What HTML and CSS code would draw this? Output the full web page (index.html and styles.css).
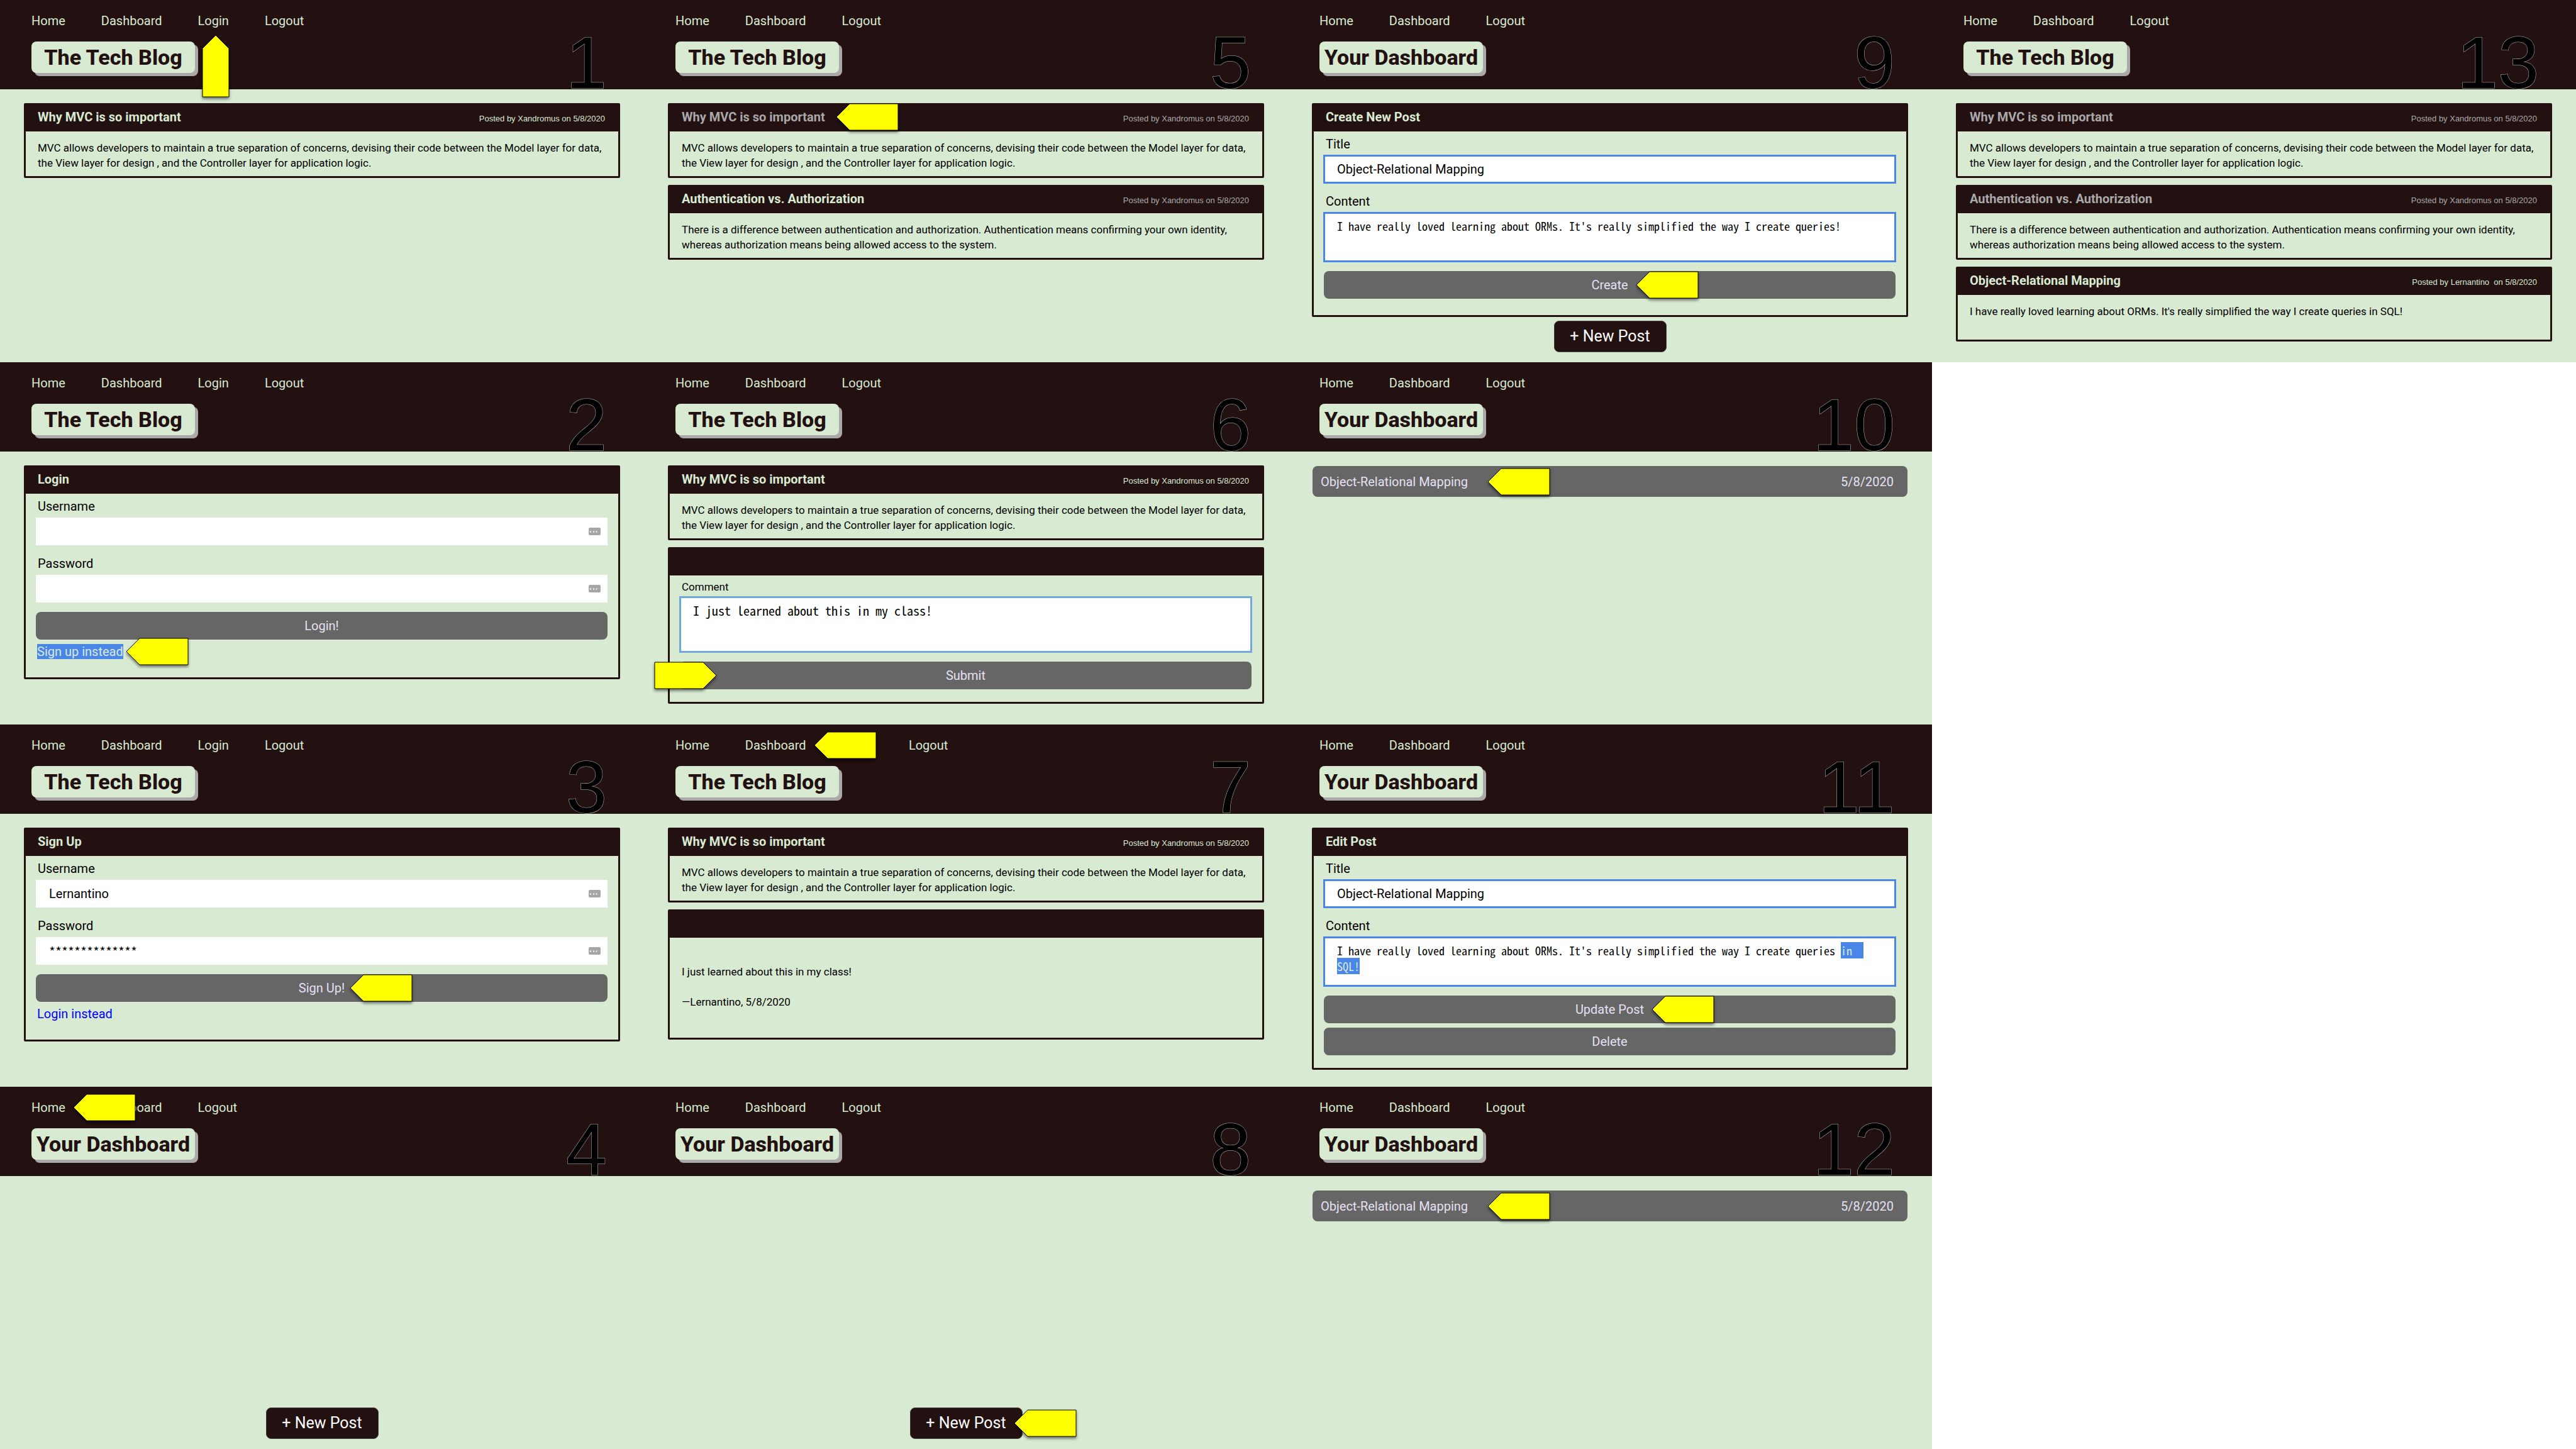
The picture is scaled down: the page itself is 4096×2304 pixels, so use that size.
FILE: index.html
```html
<!DOCTYPE html>
<html lang="en">
<head>
<meta charset="utf-8">
<title>The Tech Blog – walkthrough</title>
<link rel="stylesheet" href="styles.css">
</head>
<body>
<svg class="defs" aria-hidden="true">
  <symbol id="arrow-left" viewBox="0 0 100 44"><path d="M1 22 22 1H99V43H22Z"/></symbol>
  <symbol id="arrow-right" viewBox="0 0 100 44"><path d="M99 22 78 1H1V43H78Z"/></symbol>
  <symbol id="arrow-up" viewBox="0 0 44 100"><path d="M22 1 43 22V99H1V22Z"/></symbol>
  <symbol id="keys" viewBox="0 0 19 12"><rect width="19" height="12" rx="2" fill="#a6a6a6"/><path d="M2 5.500h2v2h-2zM7 5.500h2v2h-2zM11.500 5.500h2v2h-2z" fill="#fff"/></symbol>
</svg>
<div class="board">

  <section class="screen">
    <header class="top">
      <div class="brand">
        <nav class="nav"><a href="#">Home</a><a href="#">Dashboard</a><a href="#" class="anchor">Login<svg class="arrow arrow-up"><use href="#arrow-up"/></svg></a><a href="#">Logout</a></nav>
        <h1 class="logo">The Tech Blog</h1>
      </div>
      <span class="step">1</span>
    </header>
    <main class="main">
      <article class="card">
        <header class="card-head"><h2>Why MVC is so important</h2><span class="byline">Posted by Xandromus on 5/8/2020</span></header>
        <p class="post">MVC allows developers to maintain a true separation of concerns, devising their code between the Model layer for data, the View layer for design , and the Controller layer for application logic.</p>
      </article>
    </main>
  </section>

  <section class="screen">
    <header class="top">
      <div class="brand">
        <nav class="nav"><a href="#">Home</a><a href="#">Dashboard</a><a href="#">Login</a><a href="#">Logout</a></nav>
        <h1 class="logo">The Tech Blog</h1>
      </div>
      <span class="step">2</span>
    </header>
    <main class="main">
      <section class="card card-form">
        <header class="card-head"><h2>Login</h2></header>
        <form class="form">
          <label for="login-user">Username</label>
          <div class="field"><input id="login-user" type="text"><svg class="keys"><use href="#keys"/></svg></div>
          <label for="login-pass">Password</label>
          <div class="field"><input id="login-pass" type="password"><svg class="keys"><use href="#keys"/></svg></div>
          <button type="button" class="btn">Login!</button>
          <a href="#" class="switch anchor marked">Sign up instead<svg class="arrow arrow-close"><use href="#arrow-left"/></svg></a>
        </form>
      </section>
    </main>
  </section>

  <section class="screen">
    <header class="top">
      <div class="brand">
        <nav class="nav"><a href="#">Home</a><a href="#">Dashboard</a><a href="#">Login</a><a href="#">Logout</a></nav>
        <h1 class="logo">The Tech Blog</h1>
      </div>
      <span class="step">3</span>
    </header>
    <main class="main">
      <section class="card card-form">
        <header class="card-head"><h2>Sign Up</h2></header>
        <form class="form">
          <label for="sign-user">Username</label>
          <div class="field"><input id="sign-user" type="text" value="Lernantino"><svg class="keys"><use href="#keys"/></svg></div>
          <label for="sign-pass">Password</label>
          <div class="field"><input id="sign-pass" class="masked" type="text" value="**************"><svg class="keys"><use href="#keys"/></svg></div>
          <button type="button" class="btn"><span class="anchor">Sign Up!<svg class="arrow arrow-near"><use href="#arrow-left"/></svg></span></button>
          <a href="#" class="switch">Login instead</a>
        </form>
      </section>
    </main>
  </section>

  <section class="screen">
    <header class="top">
      <div class="brand">
        <nav class="nav"><a href="#" class="anchor">Home<svg class="arrow"><use href="#arrow-left"/></svg></a><a href="#">Dashboard</a><a href="#">Logout</a></nav>
        <h1 class="logo">Your Dashboard</h1>
      </div>
      <span class="step">4</span>
    </header>
    <main class="main">
      <button type="button" class="new-post">+ New Post</button>
    </main>
  </section>

  <section class="screen">
    <header class="top">
      <div class="brand">
        <nav class="nav"><a href="#">Home</a><a href="#">Dashboard</a><a href="#">Logout</a></nav>
        <h1 class="logo">The Tech Blog</h1>
      </div>
      <span class="step">5</span>
    </header>
    <main class="main">
      <article class="card visited">
        <header class="card-head"><h2 class="anchor">Why MVC is so important<svg class="arrow arrow-wide"><use href="#arrow-left"/></svg></h2><span class="byline">Posted by Xandromus on 5/8/2020</span></header>
        <p class="post">MVC allows developers to maintain a true separation of concerns, devising their code between the Model layer for data, the View layer for design , and the Controller layer for application logic.</p>
      </article>
      <article class="card">
        <header class="card-head"><h2>Authentication vs. Authorization</h2><span class="byline seen">Posted by Xandromus on 5/8/2020</span></header>
        <p class="post">There is a difference between authentication and authorization. Authentication means confirming your own identity, whereas authorization means being allowed access to the system.</p>
      </article>
    </main>
  </section>

  <section class="screen">
    <header class="top">
      <div class="brand">
        <nav class="nav"><a href="#">Home</a><a href="#">Dashboard</a><a href="#">Logout</a></nav>
        <h1 class="logo">The Tech Blog</h1>
      </div>
      <span class="step">6</span>
    </header>
    <main class="main">
      <article class="card">
        <header class="card-head"><h2>Why MVC is so important</h2><span class="byline">Posted by Xandromus on 5/8/2020</span></header>
        <p class="post">MVC allows developers to maintain a true separation of concerns, devising their code between the Model layer for data, the View layer for design , and the Controller layer for application logic.</p>
      </article>
      <section class="card">
        <header class="card-head"></header>
        <form class="form">
          <label for="comment" class="label-small">Comment</label>
          <textarea id="comment" class="comment">I just learned about this in my class!</textarea>
          <button type="button" class="btn anchor">Submit<svg class="arrow arrow-lead"><use href="#arrow-right"/></svg></button>
        </form>
      </section>
    </main>
  </section>

  <section class="screen">
    <header class="top">
      <div class="brand">
        <nav class="nav"><a href="#">Home</a><a href="#" class="anchor over">Dashboard<svg class="arrow"><use href="#arrow-left"/></svg></a><a href="#">Login</a><a href="#">Logout</a></nav>
        <h1 class="logo">The Tech Blog</h1>
      </div>
      <span class="step">7</span>
    </header>
    <main class="main">
      <article class="card">
        <header class="card-head"><h2>Why MVC is so important</h2><span class="byline">Posted by Xandromus on 5/8/2020</span></header>
        <p class="post">MVC allows developers to maintain a true separation of concerns, devising their code between the Model layer for data, the View layer for design , and the Controller layer for application logic.</p>
      </article>
      <section class="card">
        <header class="card-head"></header>
        <div class="reply"><p>I just learned about this in my class!</p><p>—Lernantino, 5/8/2020</p></div>
      </section>
    </main>
  </section>

  <section class="screen">
    <header class="top">
      <div class="brand">
        <nav class="nav"><a href="#">Home</a><a href="#">Dashboard</a><a href="#">Logout</a></nav>
        <h1 class="logo">Your Dashboard</h1>
      </div>
      <span class="step">8</span>
    </header>
    <main class="main">
      <button type="button" class="new-post"><span class="anchor">+ New Post<svg class="arrow"><use href="#arrow-left"/></svg></span></button>
    </main>
  </section>

  <section class="screen">
    <header class="top">
      <div class="brand">
        <nav class="nav"><a href="#">Home</a><a href="#">Dashboard</a><a href="#">Logout</a></nav>
        <h1 class="logo">Your Dashboard</h1>
      </div>
      <span class="step">9</span>
    </header>
    <main class="main">
      <section class="card card-form">
        <header class="card-head"><h2>Create New Post</h2></header>
        <form class="form">
          <label for="new-title">Title</label>
          <div class="field"><input id="new-title" class="ringed" type="text" value="Object-Relational Mapping"></div>
          <label for="new-content">Content</label>
          <textarea id="new-content" class="ringed">I have really loved learning about ORMs. It's really simplified the way I create queries!</textarea>
          <button type="button" class="btn"><span class="anchor">Create<svg class="arrow"><use href="#arrow-left"/></svg></span></button>
        </form>
      </section>
      <button type="button" class="new-post">+ New Post</button>
    </main>
  </section>

  <section class="screen">
    <header class="top">
      <div class="brand">
        <nav class="nav"><a href="#">Home</a><a href="#">Dashboard</a><a href="#">Logout</a></nav>
        <h1 class="logo">Your Dashboard</h1>
      </div>
      <span class="step">10</span>
    </header>
    <main class="main">
      <a href="#" class="row"><span class="anchor">Object-Relational Mapping<svg class="arrow arrow-far"><use href="#arrow-left"/></svg></span><span>5/8/2020</span></a>
    </main>
  </section>

  <section class="screen">
    <header class="top">
      <div class="brand">
        <nav class="nav"><a href="#">Home</a><a href="#">Dashboard</a><a href="#">Logout</a></nav>
        <h1 class="logo">Your Dashboard</h1>
      </div>
      <span class="step">11</span>
    </header>
    <main class="main">
      <section class="card card-form">
        <header class="card-head"><h2>Edit Post</h2></header>
        <form class="form">
          <label for="edit-title">Title</label>
          <div class="field"><input id="edit-title" class="ringed" type="text" value="Object-Relational Mapping"></div>
          <label for="edit-content">Content</label>
          <textarea id="edit-content" class="ringed" spellcheck="false">I have really loved learning about ORMs. It's really simplified the way I create queries in SQL!</textarea>
          <button type="button" class="btn"><span class="anchor">Update Post<svg class="arrow"><use href="#arrow-left"/></svg></span></button>
          <button type="button" class="btn btn-next">Delete</button>
        </form>
      </section>
    </main>
  </section>

  <section class="screen">
    <header class="top">
      <div class="brand">
        <nav class="nav"><a href="#">Home</a><a href="#">Dashboard</a><a href="#">Logout</a></nav>
        <h1 class="logo">Your Dashboard</h1>
      </div>
      <span class="step">12</span>
    </header>
    <main class="main">
      <a href="#" class="row"><span class="anchor">Object-Relational Mapping<svg class="arrow arrow-far"><use href="#arrow-left"/></svg></span><span>5/8/2020</span></a>
    </main>
  </section>

  <section class="screen">
    <header class="top">
      <div class="brand">
        <nav class="nav"><a href="#">Home</a><a href="#">Dashboard</a><a href="#">Logout</a></nav>
        <h1 class="logo">The Tech Blog</h1>
      </div>
      <span class="step">13</span>
    </header>
    <main class="main">
      <article class="card visited">
        <header class="card-head"><h2>Why MVC is so important</h2><span class="byline">Posted by Xandromus on 5/8/2020</span></header>
        <p class="post">MVC allows developers to maintain a true separation of concerns, devising their code between the Model layer for data, the View layer for design , and the Controller layer for application logic.</p>
      </article>
      <article class="card visited">
        <header class="card-head"><h2>Authentication vs. Authorization</h2><span class="byline">Posted by Xandromus on 5/8/2020</span></header>
        <p class="post">There is a difference between authentication and authorization. Authentication means confirming your own identity, whereas authorization means being allowed access to the system.</p>
      </article>
      <article class="card">
        <header class="card-head"><h2>Object-Relational Mapping</h2><span class="byline">Posted by Lernantino&nbsp; on 5/8/2020</span></header>
        <p class="post">I have really loved learning about ORMs. It's really simplified the way I create queries in SQL!</p>
      </article>
    </main>
  </section>

</div>
<script src="select.js"></script>
</body>
</html>
```

FILE: select.js
```js
// Select the words added to the post that is being edited.
const box = document.getElementById('edit-content');
const start = box.value.indexOf('in SQL!');
box.focus({ preventScroll: true });
box.setSelectionRange(start, box.value.length);
```

FILE: styles.css
```css
:root {
  --dark: #231011;
  --pale: #d9ead3;
  --grey: #666666;
  --lilac: #e6e0f2;
  --blue: #4a86e8;
}

* { box-sizing: border-box; }

body {
  margin: 0;
  background: #fff;
  color: #000;
  font: 20px/24px Roboto, "Liberation Sans", sans-serif;
}

h1, h2, p { margin: 0; }
a { text-decoration: none; }
.defs { display: none; }

.board {
  display: grid;
  grid-template-columns: repeat(4, 1fr);
  grid-template-rows: repeat(4, minmax(25vh, auto));
  grid-auto-flow: column;
}

.screen {
  display: flex;
  flex-direction: column;
  background: var(--pale);
}

/* Header */
.top {
  display: flex;
  justify-content: space-between;
  align-items: flex-end;
  padding: 0 59px 0 50px;
  background: var(--dark);
}

.brand { padding: 21px 0 26px; }

.nav {
  display: flex;
  gap: 57px;
  margin-bottom: 21px;
}
.nav a { color: var(--pale); }

.logo {
  width: max-content;
  min-width: 260px;
  padding: 0 6px;
  border-radius: 8px;
  background: var(--pale);
  box-shadow: 5px 5px 0 #a9a9a9;
  color: var(--dark);
  font-size: 34px;
  font-weight: 800;
  line-height: 50px;
  text-align: center;
}

.step {
  color: #000;
  font: 117px/84px "Liberation Sans", Arial, sans-serif;
  -webkit-text-stroke: 1px #bbb;
  paint-order: stroke fill;
}

/* Content */
.main {
  flex: 1;
  display: flex;
  flex-direction: column;
  gap: 11px;
  padding: 22px 38px 16px;
}

.card {
  border: 3px solid var(--dark);
  border-radius: 2px;
}
.card-form { min-height: 340px; }

.card-head {
  display: flex;
  justify-content: space-between;
  align-items: baseline;
  height: 42px;
  padding: 0 21px 0 19px;
  background: var(--dark);
  color: var(--pale);
  line-height: 38px;
}
.card-head h2 { font-size: 20px; }
.byline { font: 13px/38px "Liberation Sans", Arial, sans-serif; }
.visited .card-head, .seen { color: #a9a9a9; }

.post {
  min-height: 71px;
  padding: 14px 12px 9px 19px;
  font-size: 17px;
}

.reply {
  display: flex;
  flex-direction: column;
  gap: 24px;
  padding: 42px 19px 45px;
  font-size: 17px;
}

/* Forms */
.form {
  display: flex;
  flex-direction: column;
  padding: 8px 17px 20px 16px;
}
.form label {
  margin: 0 3px 6px;
}
.form .label-small {
  font-size: 17px;
  line-height: 20px;
}

.field {
  position: relative;
  margin-bottom: 17px;
}
.field:has(+ .btn) { margin-bottom: 15px; }

.field input {
  display: block;
  width: 100%;
  height: 44px;
  padding: 0 44px 0 21px;
  border: 0;
  background: #fff;
  color: #000;
  font: inherit;
}
.field .masked { font-family: "Noto Sans Mono CJK SC", "Liberation Mono", monospace; }

.keys {
  position: absolute;
  top: 16px;
  right: 11px;
  width: 19px;
  height: 12px;
}

textarea {
  display: block;
  height: 78px;
  margin: 0 0 15px;
  padding: 9px 30px 0 21px;
  border: 0;
  background: #fff;
  color: #000;
  font: 18px/25px "Noto Sans Mono CJK SC", "Noto Sans Mono CJK JP", "Liberation Mono", monospace;
  resize: none;
  overflow: hidden;
}
textarea::selection { background: var(--blue); color: var(--pale); }

.ringed, .ringed:focus { outline: 3px solid var(--blue); outline-offset: -2px; }

.comment {
  height: 88px;
  outline: 3px solid #6fa8dc;
  outline-offset: -2px;
  font-size: 20px;
}

.btn {
  height: 44px;
  padding: 0;
  border: 0;
  border-radius: 8px;
  background: var(--grey);
  color: var(--lilac);
  font: inherit;
}
.btn-next { margin-top: 7px; }

.switch {
  align-self: flex-start;
  margin: 7px 2px 0;
  color: #0000ff;
}
.marked { background: var(--blue); color: var(--pale); }

.new-post {
  align-self: center;
  width: 179px;
  height: 50px;
  margin-top: auto;
  padding: 0;
  border: 1px solid #434343;
  border-radius: 8px;
  background: var(--dark);
  color: #fff;
  font: 25px/30px Roboto, "Liberation Sans", sans-serif;
}
.card + .new-post { margin-top: -5px; }

.row {
  display: flex;
  justify-content: space-between;
  align-items: center;
  height: 49px;
  margin: 1px;
  padding: 0 22px 0 13px;
  border-radius: 8px;
  background: var(--grey);
  color: var(--lilac);
}

/* Yellow pointers laid over the screens */
.anchor { position: relative; }

.arrow {
  position: absolute;
  z-index: 1;
  top: 50%;
  left: 100%;
  width: 100px;
  height: 44px;
  margin: -22px 0 0 12px;
  overflow: visible;
  fill: #ffff00;
  stroke: #000;
  stroke-width: 1px;
  filter: drop-shadow(0 3px 2px rgba(0, 0, 0, 0.5));
}
.arrow-close { margin-left: 4px; }
.arrow-near { margin-left: 8px; }
.arrow-wide { margin-left: 17px; }
.arrow-far { margin-left: 31px; }
.arrow-lead { left: -41px; margin-left: 0; }
.arrow-up {
  top: 100%;
  left: 50%;
  width: 44px;
  height: 100px;
  margin: 10px 0 0 -18px;
}
```
